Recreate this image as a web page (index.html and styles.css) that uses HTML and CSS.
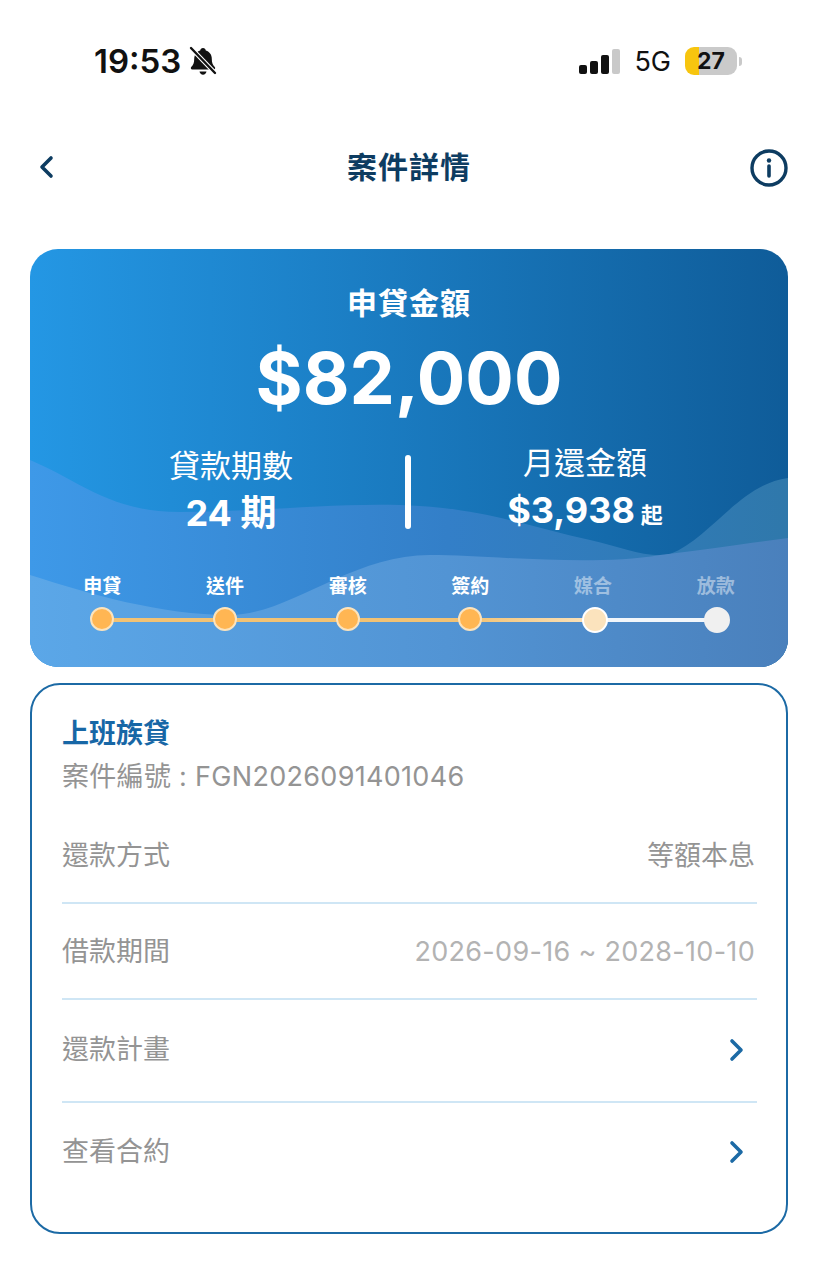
FILE: index.html
```html
<!DOCTYPE html>
<html lang="zh-Hant">
<head>
  <meta charset="UTF-8" />
  <title>案件詳情</title>
  <link rel="stylesheet" href="styles.css">
</head>
<body>

  <div class="status-bar">
    <div class="status-left">
      <span class="clock">19:53</span>
      <svg class="bell" viewBox="0 0 28 30" width="28" height="30">
        <path d="M14 2c1.6 0 2.6 1 2.8 2.4 4 1.2 6 4.4 6 8.6 0 4 1 5.800 3 8 .8 1 .3 2.400-1 2.400H3.200c-1.300 0-1.800-1.400-1-2.400 2-2.200 3-4 3-8 0-4.200 2-7.400 6-8.600C11.400 3 12.400 2 14 2z" fill="#111"/>
        <path d="M10.500 25.500h7c-.3 2-1.700 3.200-3.500 3.200s-3.200-1.200-3.500-3.200z" fill="#111"/>
        <path d="M2 2l24 25" stroke="#fff" stroke-width="4.600"/>
        <path d="M2 2l24 25" stroke="#111" stroke-width="2.400" stroke-linecap="round"/>
      </svg>
    </div>
    <div class="status-right">
      <div class="signal">
        <i class="bar bar-1"></i>
        <i class="bar bar-2"></i>
        <i class="bar bar-3"></i>
        <i class="bar bar-4"></i>
      </div>
      <span class="network">5G</span>
      <div class="battery"><span class="battery-level">27</span></div>
      <i class="battery-cap"></i>
    </div>
  </div>

  <nav class="navbar">
    <svg class="back" viewBox="0 0 16 24" width="16" height="24">
      <path d="M13 3L4 12l9 9" fill="none" stroke="#0d3c61" stroke-width="3.600" stroke-linecap="round" stroke-linejoin="round"/>
    </svg>
    <h1 class="nav-title">案件詳情</h1>
    <svg class="info" viewBox="0 0 38 38" width="38" height="38">
      <circle cx="19" cy="19" r="17" fill="none" stroke="#0d3c61" stroke-width="3.400"/>
      <circle cx="19" cy="11.500" r="2.200" fill="#0d3c61"/>
      <path d="M19 17v10" stroke="#0d3c61" stroke-width="3.600" stroke-linecap="round"/>
    </svg>
  </nav>

  <section class="hero">
    <svg class="hero-waves" viewBox="0 0 758 418" preserveAspectRatio="none">
      <defs>
        <linearGradient id="backWave" x1="0" y1="0" x2="1" y2="0">
          <stop offset="0" stop-color="#3e99e8"/>
          <stop offset="0.55" stop-color="#337fc8"/>
          <stop offset="1" stop-color="#2f78ab"/>
        </linearGradient>
        <linearGradient id="frontWave" x1="0" y1="0" x2="1" y2="0">
          <stop offset="0" stop-color="#5ba7e8"/>
          <stop offset="0.55" stop-color="#5294d4"/>
          <stop offset="1" stop-color="#4a80bc"/>
        </linearGradient>
      </defs>
      <path d="M0 211C50 232 80 263 150 263C230 263 300 254 370 256C450 258 500 278 560 291C590 298 620 310 640 305C680 290 710 235 758 229V418H0Z" fill="url(#backWave)"/>
      <path d="M0 326C60 345 130 366 200 366C260 366 320 306 400 306C460 306 560 318 630 306C680 300 720 294 758 289V418H0Z" fill="url(#frontWave)"/>
    </svg>

    <div class="hero-body">
      <div class="hero-label">申貸金額</div>
      <div class="hero-amount">$82,000</div>

      <div class="stats">
        <div class="stat stat-term">
          <div class="stat-label">貸款期數</div>
          <div class="stat-value">24 期</div>
        </div>
        <div class="stat-line"></div>
        <div class="stat stat-monthly">
          <div class="stat-label">月還金額</div>
          <div class="stat-value">$3,938<small>起</small></div>
        </div>
      </div>

      <div class="steps">
        <div class="step done"><span class="step-name">申貸</span><i class="dot"></i></div>
        <div class="step done"><span class="step-name">送件</span><i class="dot"></i></div>
        <div class="step done"><span class="step-name">審核</span><i class="dot"></i></div>
        <div class="step done to-current"><span class="step-name">簽約</span><i class="dot"></i></div>
        <div class="step current"><span class="step-name">媒合</span><i class="dot"></i></div>
        <div class="step todo"><span class="step-name">放款</span><i class="dot"></i></div>
      </div>
    </div>
  </section>

  <section class="detail">
    <div class="detail-title">上班族貸</div>
    <div class="detail-no">案件編號 : FGN2026091401046</div>

    <div class="row row-first">
      <span>還款方式</span>
      <span>等額本息</span>
    </div>
    <div class="row">
      <span>借款期間</span>
      <span class="row-date">2026-09-16 ~ 2028-10-10</span>
    </div>
    <div class="row row-link">
      <span>還款計畫</span>
      <svg viewBox="0 0 16 24" width="16" height="24"><path d="M3 3l9 9-9 9" fill="none" stroke="#1c6aa5" stroke-width="3.600" stroke-linecap="round" stroke-linejoin="round"/></svg>
    </div>
    <div class="row row-link row-last">
      <span>查看合約</span>
      <svg viewBox="0 0 16 24" width="16" height="24"><path d="M3 3l9 9-9 9" fill="none" stroke="#1c6aa5" stroke-width="3.600" stroke-linecap="round" stroke-linejoin="round"/></svg>
    </div>
  </section>

</body>
</html>
```

FILE: styles.css
```css
* {
  box-sizing: border-box;
}

body {
  margin: 0;
  background: #fff;
  font-family: Inter, 'Noto Sans CJK TC', sans-serif;
  color: #111;
}

/* status bar */
.status-bar {
  height: 122px;
  padding: 0 76px 0 94px;
  display: flex;
  justify-content: space-between;
  align-items: center;
}

.status-left,
.status-right {
  display: flex;
  align-items: center;
}

.clock {
  font-size: 33px;
  font-weight: 600;
}

.bell {
  margin-left: 8px;
}

.signal {
  display: flex;
  align-items: flex-end;
  gap: 3px;
  height: 25px;
}

.bar {
  width: 8px;
  border-radius: 2px;
  background: #111;
}

.bar-1 { height: 9px; }
.bar-2 { height: 13px; }
.bar-3 { height: 19px; }
.bar-4 { height: 25px; background: #c9c9c9; }

.network {
  margin-left: 14px;
  font-size: 27px;
}

.battery {
  margin-left: 14px;
  width: 52px;
  height: 28px;
  border-radius: 9px;
  background: linear-gradient(90deg, #f7c50f 0, #f7c50f 26%, #cacaca 26%);
  display: flex;
  align-items: center;
  justify-content: center;
}

.battery-level {
  font-size: 23px;
  font-weight: 700;
}

.battery-cap {
  margin-left: 2px;
  width: 3px;
  height: 9px;
  border-radius: 0 3px 3px 0;
  background: #c9c9c9;
}

/* top nav */
.navbar {
  height: 92px;
  padding: 0 30px;
  display: flex;
  align-items: center;
}

.back {
  margin: 0 14px 2px 8px;
}

.nav-title {
  flex: 1;
  margin: 0;
  padding-bottom: 6px;
  text-align: center;
  font-size: 30px;
  font-weight: 700;
  letter-spacing: 1px;
  color: #0d3c61;
}

/* blue summary card */
.hero {
  position: relative;
  overflow: hidden;
  height: 418px;
  margin: 35px 30px 0;
  border-radius: 28px;
  background: linear-gradient(90deg, #2497e4, #0f5c99);
  color: #fff;
}

.hero-waves {
  position: absolute;
  top: 0;
  left: 0;
  width: 100%;
  height: 100%;
}

.hero-body {
  position: relative;
  padding-top: 35px;
  text-align: center;
}

.hero-label {
  font-size: 30px;
  font-weight: 700;
  line-height: 38px;
  letter-spacing: 1px;
}

.hero-amount {
  margin-top: 12px;
  font-size: 72px;
  font-weight: 700;
  line-height: 88px;
}

.stats {
  margin-top: 21px;
  padding: 0 24px;
  display: flex;
  align-items: center;
}

.stat {
  flex: 1;
}

.stat-term {
  padding-left: 3px;
}

.stat-monthly {
  padding-right: 5px;
}

.stat-label {
  font-size: 31px;
  line-height: 40px;
}

.stat-value {
  margin-top: 7px;
  font-size: 36px;
  font-weight: 700;
  line-height: 40px;
}

.stat-value small {
  margin-left: 6px;
  font-size: 22px;
}

.stat-line {
  width: 6px;
  height: 74px;
  margin-top: 6px;
  border-radius: 3px;
  background: #fff;
}

/* progress steps */
.steps {
  margin-top: 38px;
  padding: 0 11px;
  display: grid;
  grid-template-columns: repeat(6, 1fr);
}

.step {
  position: relative;
  display: flex;
  flex-direction: column;
  align-items: center;
  gap: 6px;
}

.step-name {
  font-size: 19px;
  font-weight: 700;
  line-height: 28px;
}

.dot {
  position: relative;
  z-index: 1;
  width: 24px;
  height: 24px;
  border-radius: 50%;
  border: 2px solid #fbe3bd;
  background: #ffb653;
}

/* line from each dot over to the next one */
.step:not(:last-child)::after {
  content: '';
  position: absolute;
  left: 50%;
  width: 100%;
  bottom: 10px;
  height: 4px;
  background: #f2c274;
}

.step.to-current::after {
  background: linear-gradient(90deg, #f2c274, #fbe3bd);
}

.step.current::after {
  background: #f2f6fa;
}

.step.current .step-name,
.step.todo .step-name {
  opacity: 0.45;
}

.step.current .dot {
  width: 26px;
  height: 26px;
  margin: 0 0 -1px 4px;
  border-color: #fff;
  background: #fbe3bd;
}

.step.todo .dot {
  width: 26px;
  height: 26px;
  margin: 0 0 -1px 3px;
  border-color: #f0f0f0;
  background: #f0f0f0;
}

/* detail card */
.detail {
  margin: 16px 30px 0;
  height: 551px;
  padding: 30px 29px 0 30px;
  border: 2px solid #1c6aa5;
  border-radius: 30px;
}

.detail-title {
  font-size: 27px;
  font-weight: 700;
  line-height: 38px;
  color: #1767a6;
}

.detail-no {
  margin-top: 5px;
  font-size: 27px;
  line-height: 38px;
  letter-spacing: 0.3px;
  color: #949494;
}

.row {
  display: flex;
  justify-content: space-between;
  align-items: center;
  height: 96px;
  padding-right: 2px;
  font-size: 27px;
  color: #949494;
  border-bottom: 2px solid #cfe6f5;
}

/* the CJK glyphs sit low in their line box */
.row span {
  margin-bottom: 4px;
}

.row-first {
  height: 108px;
  padding-top: 12px;
}

.row .row-date {
  margin-bottom: 0;
  letter-spacing: 0.3px;
  color: #b3b3b3;
}

.row-link {
  height: 103px;
  padding: 0 12px 2px 0;
}

.row-last {
  padding-bottom: 6px;
  border-bottom: none;
}
```
